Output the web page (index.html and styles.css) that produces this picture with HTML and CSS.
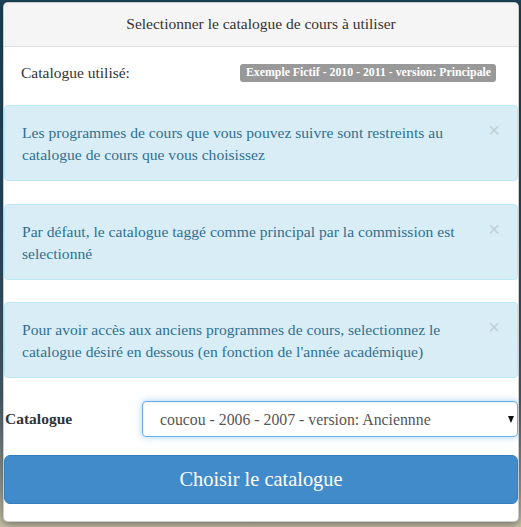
FILE: index.html
```html
<!DOCTYPE html>
<html lang="fr">
<head>
<meta charset="utf-8">
<title>Catalogue</title>
<link rel="stylesheet" href="styles.css">
</head>
<body>
<div class="modal">
  <div class="modal-header">Selectionner le catalogue de cours à utiliser</div>
  <div class="modal-body">
    <div class="current-row">
      <span class="current-label">Catalogue utilisé:</span>
      <span class="badge">Exemple Fictif - 2010 - 2011 - version: Principale</span>
    </div>
    <div class="alert alert-1">
      <span class="close">×</span>
      <p>Les programmes de cours que vous pouvez suivre sont restreints au catalogue de cours que vous choisissez</p>
    </div>
    <div class="alert alert-2">
      <span class="close">×</span>
      <p>Par défaut, le catalogue taggé comme principal par la commission est selectionné</p>
    </div>
    <div class="alert alert-3">
      <span class="close">×</span>
      <p>Pour avoir accès aux anciens programmes de cours, selectionnez le catalogue désiré en dessous (en fonction de l'année académique)</p>
    </div>
    <div class="select-row">
      <label class="select-label" for="cat">Catalogue</label>
      <div class="select-wrap">
        <select id="cat" class="select">
          <option>coucou - 2006 - 2007 - version: Anciennne</option>
          <option>Exemple Fictif - 2010 - 2011 - version: Principale</option>
        </select>
      </div>
    </div>
    <button class="btn" type="button">Choisir le catalogue</button>
  </div>
</div>
</body>
</html>
```
FILE: styles.css
```css
html, body {
  margin: 0;
  height: 100%;
}
body {
  font-family: "Liberation Serif", "Times New Roman", serif;
  color: #333;
  background: linear-gradient(to bottom, #1b4358 0%, #2a4b5f 45%, #4a5f6c 75%, #9a9c92 93%, #cbc5aa 100%);
  padding: 2px 2px 0 3px;
  box-sizing: border-box;
}
.modal {
  background: #fff;
  border: 1px solid rgba(0,0,0,0.2);
  border-radius: 5px;
  box-shadow: 0 3px 9px rgba(0,0,0,0.4);
  height: 520px;
  box-sizing: border-box;
  overflow: hidden;
}
.modal-header {
  background: #f5f5f5;
  border-bottom: 1px solid #e0e0e0;
  text-align: center;
  font-size: 15.5px;
  line-height: 20px;
  padding: 11px 0 12px;
  color: #333;
}
.current-row {
  display: flex;
  align-items: center;
  padding: 15px 21px 0 17px;
  height: 22px;
  margin-bottom: 21px;
}
.current-label {
  font-size: 15.5px;
  width: 219px;
}
.badge {
  background: #999;
  color: #fff;
  font-weight: bold;
  font-size: 11.8px;
  line-height: 13px;
  padding: 2px 5px 3px 6px;
  border-radius: 3px;
  white-space: nowrap;
}
.alert {
  position: relative;
  background: #d9edf7;
  border: 1px solid #bce8f1;
  border-radius: 4px;
  color: #31708f;
  padding: 16px 50px 14px 17px;
  font-size: 15.6px;
  line-height: 22px;
}
.alert p {
  margin: 0;
}
.alert-1 { margin-bottom: 23px; }
.alert-2 { margin-bottom: 22px; }
.alert-3 { margin-bottom: 23px; }
.close {
  position: absolute;
  right: 17px;
  top: 14px;
  font-family: "Liberation Sans", Arial, sans-serif;
  font-size: 20px;
  font-weight: normal;
  line-height: 1;
  color: #000;
  opacity: 0.13;
}
.select-row {
  display: flex;
  align-items: center;
  margin-bottom: 18px;
}
.select-label {
  font-weight: bold;
  font-size: 15.5px;
  width: 137px;
  padding-left: 1px;
}
.select-wrap {
  position: relative;
  flex: 1;
}
.select-wrap::after {
  content: "";
  position: absolute;
  right: 4px;
  top: 15px;
  border-left: 3.5px solid transparent;
  border-right: 3.5px solid transparent;
  border-top: 7px solid #111;
  pointer-events: none;
}
.select {
  -webkit-appearance: none;
  appearance: none;
  width: 100%;
  height: 36px;
  border: 1px solid #66afe9;
  border-radius: 4px;
  background: #fff;
  box-shadow: inset 0 1px 1px rgba(0,0,0,0.075), 0 0 7px rgba(102,175,233,0.6);
  font-family: "Liberation Serif", "Times New Roman", serif;
  font-size: 15.8px;
  color: #555;
  padding: 0 20px 0 17px;
  outline: none;
  box-sizing: border-box;
}
.btn {
  display: block;
  width: 100%;
  height: 49px;
  background: #428bca;
  border: 1px solid #357ebd;
  border-radius: 6px;
  color: #fff;
  font-family: "Liberation Serif", "Times New Roman", serif;
  font-size: 20.4px;
  padding: 0;
  cursor: pointer;
}
```
